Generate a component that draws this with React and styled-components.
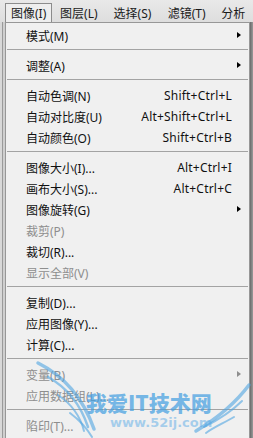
import React from "react";
import styled, { createGlobalStyle } from "styled-components";

const GlobalStyle = createGlobalStyle`
  html, body { margin: 0; padding: 0; }
  body { background: #d2d2d2; overflow: hidden; }
`;

const Frame = styled.div`
  position: relative;
  width: 253px;
  height: 438px;
  overflow: hidden;
  background: #cfcfcf;
  font-family: "Noto Sans", "Noto Sans CJK SC", sans-serif;
  font-size: 12px;
  color: #111;
`;

const MenuBar = styled.div`
  display: flex;
  align-items: flex-end;
  height: 22px;
  padding-left: 5px;
  background: linear-gradient(#e9e9e9, #dedede);
  box-sizing: border-box;
`;

const BarItem = styled.div`
  box-sizing: border-box;
  height: 19px;
  width: ${(p) => p.$w}px;
  display: flex;
  align-items: center;
  justify-content: center;
  white-space: nowrap;
  color: #1a1a1a;
  border: 1px solid ${(p) => (p.$active ? "#8c8c8c" : "transparent")};
  border-bottom: none;
  background: ${(p) => (p.$active ? "#eeeeee" : "transparent")};
  padding-bottom: 1px;
`;

const Body = styled.div`
  display: flex;
  height: 416px;
`;

const LeftStrip = styled.div`
  width: 5px;
  background: linear-gradient(90deg, #d8d8d8 0, #d8d8d8 2px, #9a9a9a 2px, #9a9a9a 3px, #cfcfcf 3px);
`;

const RightStrip = styled.div`
  flex: 1;
  background: linear-gradient(90deg, #6a6a6a, #9a9a9a);
`;

const Panel = styled.div`
  box-sizing: border-box;
  width: 245px;
  background: #f0f0f0;
  border: 1px solid #979797;
  border-bottom: none;
  padding-top: 2px;
  display: flex;
  flex-direction: column;
`;

const Item = styled.div`
  position: relative;
  display: flex;
  align-items: center;
  height: 21px;
  padding: 0 17px 0 20px;
  color: ${(p) => (p.$disabled ? "#8e8e8e" : "#111")};
  white-space: nowrap;
`;

const Label = styled.span`
  flex: 1;
`;

const Shortcut = styled.span`
  letter-spacing: 0.2px;
`;

const Arrow = styled.span`
  position: absolute;
  right: 8px;
  top: 7px;
  width: 0;
  height: 0;
  border-top: 3.5px solid transparent;
  border-bottom: 3.5px solid transparent;
  border-left: 4px solid ${(p) => (p.$disabled ? "#8e8e8e" : "#000")};
`;

const Separator = styled.div`
  height: 1px;
  margin: 3px 1px 5px 1px;
  background: #a3a3a3;
`;

const Watermark = styled.div`
  position: absolute;
  left: 0;
  top: 355px;
  width: 253px;
  height: 83px;
  pointer-events: none;
`;

const WmTitle = styled.div`
  position: absolute;
  left: 86px;
  top: 34px;
  font-family: "Noto Sans CJK SC", sans-serif;
  font-weight: 900;
  font-size: 21px;
  color: rgba(70, 160, 225, 0.72);
  white-space: nowrap;
  line-height: 26px;
`;

const WmUrl = styled.div`
  position: absolute;
  left: 110px;
  top: 60px;
  font-family: "DejaVu Sans", sans-serif;
  font-weight: bold;
  font-size: 13px;
  line-height: 16px;
  color: rgba(90, 170, 230, 0.5);
  white-space: nowrap;
`;

const menu = [
  { label: "模式(M)", sub: true },
  "sep",
  { label: "调整(A)", sub: true },
  "sep",
  { label: "自动色调(N)", sc: "Shift+Ctrl+L" },
  { label: "自动对比度(U)", sc: "Alt+Shift+Ctrl+L" },
  { label: "自动颜色(O)", sc: "Shift+Ctrl+B" },
  "sep",
  { label: "图像大小(I)...", sc: "Alt+Ctrl+I" },
  { label: "画布大小(S)...", sc: "Alt+Ctrl+C" },
  { label: "图像旋转(G)", sub: true },
  { label: "裁剪(P)", disabled: true },
  { label: "裁切(R)..." },
  { label: "显示全部(V)", disabled: true },
  "sep",
  { label: "复制(D)..." },
  { label: "应用图像(Y)..." },
  { label: "计算(C)..." },
  "sep",
  { label: "变量(B)", sub: true, disabled: true },
  { label: "应用数据组(L)...", disabled: true },
  "sep",
  { label: "陷印(T)...", disabled: true },
];

const bar = [
  { t: "图像(I)", w: 48, active: true },
  { t: "图层(L)", w: 54 },
  { t: "选择(S)", w: 55 },
  { t: "滤镜(T)", w: 55 },
  { t: "分析", w: 40 },
];

export default function App() {
  return (
    <Frame>
      <GlobalStyle />
      <MenuBar>
        {bar.map((b) => (
          <BarItem key={b.t} $w={b.w} $active={b.active}>
            {b.t}
          </BarItem>
        ))}
      </MenuBar>
      <Body>
        <LeftStrip />
        <Panel>
          {menu.map((m, i) =>
            m === "sep" ? (
              <Separator key={i} />
            ) : (
              <Item key={i} $disabled={m.disabled}>
                <Label>{m.label}</Label>
                {m.sc && <Shortcut>{m.sc}</Shortcut>}
                {m.sub && <Arrow $disabled={m.disabled} />}
              </Item>
            )
          )}
        </Panel>
        <RightStrip />
      </Body>
      <Watermark>
        <svg width="253" height="83" viewBox="0 0 253 83">
          <g fill="none" stroke="rgba(80,165,225,0.6)" strokeLinecap="round">
            <path d="M38 8 C 62 20, 82 40, 94 74" strokeWidth="3.5" />
            <path d="M48 22 C 66 32, 80 48, 88 72" strokeWidth="2.5" />
            <path d="M58 40 C 70 48, 80 60, 84 76" strokeWidth="2" />
            <path d="M70 58 C 78 64, 86 72, 92 82" strokeWidth="2" />
            <path d="M249 30 C 234 50, 216 64, 196 76" strokeWidth="3.5" />
            <path d="M242 46 C 230 58, 216 66, 204 72" strokeWidth="2" />
            <path d="M234 62 C 224 68, 214 72, 206 78" strokeWidth="2" />
          </g>
        </svg>
        <WmTitle>我爱IT技术网</WmTitle>
        <WmUrl>www.52ij.com</WmUrl>
      </Watermark>
    </Frame>
  );
}
